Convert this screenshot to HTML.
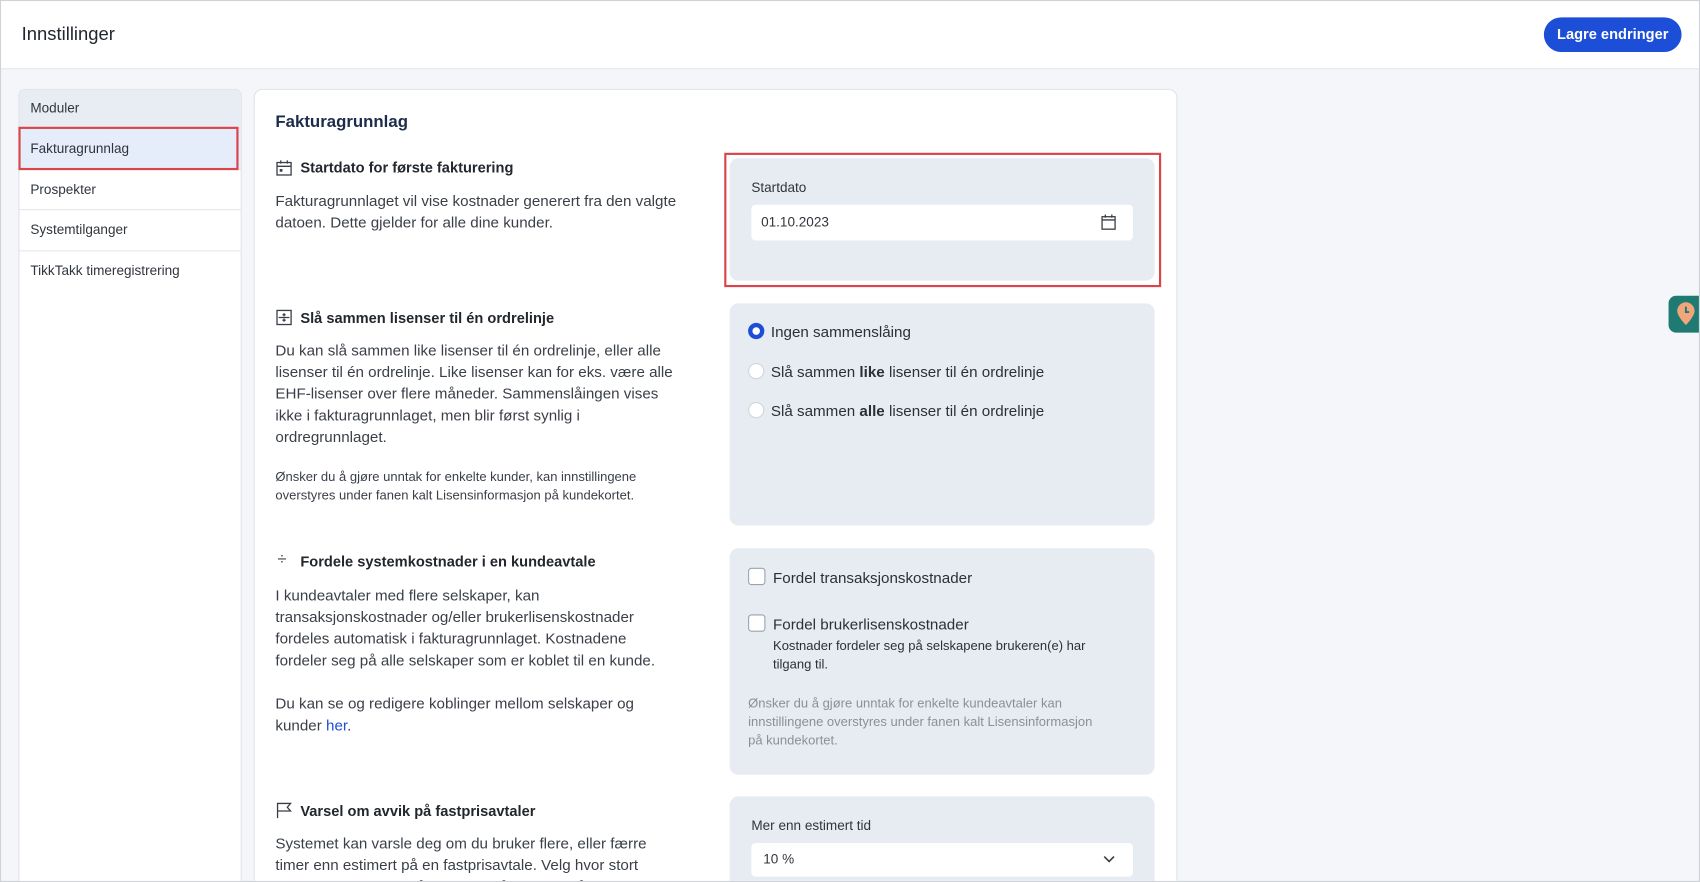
<!DOCTYPE html>
<html><head><meta charset="utf-8"><style>
*{box-sizing:border-box;margin:0;padding:0}
html,body{width:1700px;height:882px;overflow:hidden;background:#f4f6f9}
#w{position:absolute;left:0;top:0;width:1568px;height:814px;transform:scale(1.08418,1.08354);transform-origin:0 0;font-family:"Liberation Sans",sans-serif;color:#30353d;background:#f4f6f9;border:1px solid #cfd3d8;overflow:hidden}
.a{position:absolute}
.hdr{left:0;top:0;width:1568px;height:63px;background:#fff;border-bottom:1px solid #e3e6ea}
.btn{left:1423px;top:15px;width:127px;height:32px;background:#1d4ed8;border-radius:16px;color:#fff;font-weight:bold;font-size:13.5px;line-height:32px;text-align:center}
.side{left:16px;top:81px;width:206px;height:760px;background:#fff;border:1px solid #dfe3e8;border-radius:6px;overflow:hidden}
.si{position:absolute;left:0;width:206px;font-size:12.5px;padding-left:10px;border-bottom:1px solid #e3e6ea;color:#30353d}
.card{left:233px;top:81px;width:852px;height:760px;background:#fff;border:1px solid #dfe3e8;border-radius:8px}
.h{font-weight:bold;font-size:13.5px;color:#22272e;white-space:nowrap}
.p{font-size:14px;line-height:20px;color:#3a3f47;white-space:nowrap}
.sm{font-size:12px;line-height:17px;color:#3a3f47;white-space:nowrap}
.pan{left:672px;width:392px;background:#e7ecf3;border-radius:8px}
.t{font-size:14px;color:#2b3038;white-space:nowrap}
.rad{width:15px;height:15px;border-radius:50%;background:#fff;border:1px solid #cfd5dd}
.cb{width:16px;height:16px;border-radius:3px;background:#fff;border:1px solid #9aa2ad}
</style></head><body><div id="w">
<div class="a hdr"></div>
<div class="a" style="left:19px;top:21px;font-size:17px;color:#22272e">Innstillinger</div>
<div class="a btn">Lagre endringer</div>

<div class="a side">
<div class="si" style="top:0;height:36px;line-height:34px;background:#e8edf3">Moduler</div>
<div class="si" style="top:36px;height:38px;line-height:36px;background:#e5edfa">Fakturagrunnlag</div>
<div class="si" style="top:74px;height:37px;line-height:36px">Prospekter</div>
<div class="si" style="top:111px;height:38px;line-height:36px">Systemtilganger</div>
<div class="si" style="top:149px;height:37px;line-height:36px;border-bottom:none">TikkTakk timeregistrering</div>
</div>
<div class="a" style="left:16px;top:116px;width:203px;height:40px;border:2px solid #d9454a"></div>

<div class="a card"></div>
<div class="a" style="left:253px;top:103px;font-size:15.5px;font-weight:bold;color:#1d2c4a">Fakturagrunnlag</div>

<svg class="a" style="left:253px;top:146px" width="16" height="16" viewBox="0 0 16 16" fill="none" stroke="#3a3f47" stroke-width="1.2"><rect x="1.5" y="3" width="13" height="11.5"/><path d="M1.5 6.5h13M5 1v3M11 1v3"/><rect x="4" y="9" width="2.5" height="2.5" fill="#3a3f47" stroke="none"/></svg>
<div class="a h" style="left:276px;top:146px">Startdato for første fakturering</div>
<div class="a p" style="left:253px;top:174px">Fakturagrunnlaget vil vise kostnader generert fra den valgte<br>datoen. Dette gjelder for alle dine kunder.</div>
<div class="a pan" style="top:145px;height:113px"></div>
<div class="a" style="left:667px;top:140px;width:403px;height:124px;border:2px solid #d9454a"></div>
<div class="a" style="left:692px;top:165px;font-size:12.5px;color:#30353d">Startdato</div>
<div class="a" style="left:692px;top:188px;width:352px;height:33px;background:#fff;border-radius:4px"></div>
<div class="a" style="left:701px;top:197px;font-size:12.5px;color:#30353d">01.10.2023</div>
<svg class="a" style="left:1014px;top:196px" width="15" height="16" viewBox="0 0 15 16" fill="none" stroke="#3a3f47" stroke-width="1.2"><rect x="1.5" y="3" width="12" height="11.5"/><path d="M1.5 6h12M4.5 1v3M10.5 1v3"/></svg>

<svg class="a" style="left:253px;top:284px" width="16" height="16" viewBox="0 0 16 16" fill="none" stroke="#3a3f47" stroke-width="1.2"><rect x="1.5" y="1.5" width="13" height="13"/><path d="M8 4v3M6.5 5.5h3M8 9v3M6.5 10.5h3M3 8h10"/></svg>
<div class="a h" style="left:276px;top:285px">Slå sammen lisenser til én ordrelinje</div>
<div class="a p" style="left:253px;top:312px">Du kan slå sammen like lisenser til én ordrelinje, eller alle<br>lisenser til én ordrelinje. Like lisenser kan for eks. være alle<br>EHF-lisenser over flere måneder. Sammenslåingen vises<br>ikke i fakturagrunnlaget, men blir først synlig i<br>ordregrunnlaget.</div>
<div class="a sm" style="left:253px;top:431px">Ønsker du å gjøre unntak for enkelte kunder, kan innstillingene<br>overstyres under fanen kalt Lisensinformasjon på kundekortet.</div>
<div class="a pan" style="top:279px;height:205px"></div>
<div class="a rad" style="left:689px;top:297px;border:4px solid #1d4ed8"></div>
<div class="a t" style="left:710px;top:297px">Ingen sammenslåing</div>
<div class="a rad" style="left:689px;top:334px"></div>
<div class="a t" style="left:710px;top:334px">Slå sammen <b>like</b> lisenser til én ordrelinje</div>
<div class="a rad" style="left:689px;top:370px"></div>
<div class="a t" style="left:710px;top:370px">Slå sammen <b>alle</b> lisenser til én ordrelinje</div>

<div class="a" style="left:255px;top:507px;font-size:15px;color:#3a3f47">÷</div>
<div class="a h" style="left:276px;top:510px">Fordele systemkostnader i en kundeavtale</div>
<div class="a p" style="left:253px;top:538px">I kundeavtaler med flere selskaper, kan<br>transaksjonskostnader og/eller brukerlisenskostnader<br>fordeles automatisk i fakturagrunnlaget. Kostnadene<br>fordeler seg på alle selskaper som er koblet til en kunde.</div>
<div class="a p" style="left:253px;top:638px">Du kan se og redigere koblinger mellom selskaper og<br>kunder <span style="color:#1d4ed8">her</span>.</div>
<div class="a pan" style="top:505px;height:209px"></div>
<div class="a cb" style="left:689px;top:523px"></div>
<div class="a t" style="left:712px;top:524px">Fordel transaksjonskostnader</div>
<div class="a cb" style="left:689px;top:566px"></div>
<div class="a t" style="left:712px;top:567px">Fordel brukerlisenskostnader</div>
<div class="a sm" style="left:712px;top:587px;color:#2b3038">Kostnader fordeler seg på selskapene brukeren(e) har<br>tilgang til.</div>
<div class="a sm" style="left:689px;top:640px;color:#8a9099">Ønsker du å gjøre unntak for enkelte kundeavtaler kan<br>innstillingene overstyres under fanen kalt Lisensinformasjon<br>på kundekortet.</div>

<svg class="a" style="left:253px;top:739px" width="16" height="16" viewBox="0 0 16 16" fill="none" stroke="#3a3f47" stroke-width="1.2"><path d="M2 15V1.5h12l-3 3.5 3 3.5H2"/></svg>
<div class="a h" style="left:276px;top:740px">Varsel om avvik på fastprisavtaler</div>
<div class="a p" style="left:253px;top:767px">Systemet kan varsle deg om du bruker flere, eller færre<br>timer enn estimert på en fastprisavtale. Velg hvor stort<br>avvik du ønsker. Du får beskjed når avviket nås.</div>
<div class="a pan" style="top:734px;height:120px"></div>
<div class="a" style="left:692px;top:754px;font-size:12.5px;color:#30353d">Mer enn estimert tid</div>
<div class="a" style="left:692px;top:777px;width:352px;height:31px;background:#fff;border-radius:4px"></div>
<div class="a" style="left:703px;top:785px;font-size:12.5px;color:#30353d">10 %</div>
<svg class="a" style="left:1016px;top:788px" width="12" height="8" viewBox="0 0 12 8" fill="none" stroke="#3a3f47" stroke-width="1.5"><path d="M1.5 1.5 6 6l4.5-4.5"/></svg>

<div class="a" style="left:1538px;top:272px;width:32px;height:34px;background:#1f7a72;border-radius:7px 0 0 7px"></div>
<svg class="a" style="left:1545px;top:277px" width="18" height="24" viewBox="0 0 18 24"><path d="M9 1a8 8 0 0 0-8 8c0 5 8 13 8 13s8-8 8-13a8 8 0 0 0-8-8z" fill="#f2a57a"/><path d="M9 5v5h3" stroke="#1f7a72" stroke-width="1.8" fill="none"/></svg>
</div></body></html>
